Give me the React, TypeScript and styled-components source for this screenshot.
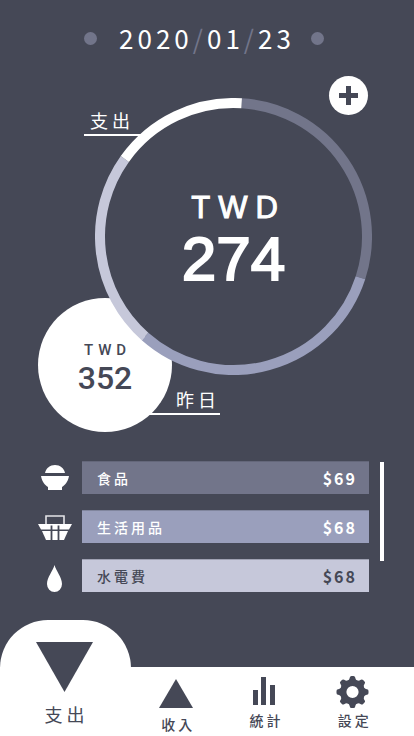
import React from "react";
import styled, { createGlobalStyle } from "styled-components";

const colors = {
  ink: "#454856",
  slate: "#72758a",
  blue: "#9a9fbc",
  mist: "#c6c8da",
  white: "#ffffff",
};

const GlobalStyle = createGlobalStyle`
  * { box-sizing: border-box; }
  body {
    margin: 0;
    background: ${colors.ink};
    color: ${colors.white};
    font-family: "Noto Sans CJK TC", "Noto Sans", sans-serif;
  }
  button { font: inherit; color: inherit; border: 0; padding: 0; cursor: pointer; }
`;

const Page = styled.div`
  display: flex;
  flex-direction: column;
  min-height: 100vh;
`;

const Header = styled.header`
  display: flex;
  align-items: center;
  justify-content: center;
  height: 76px;
  gap: 16px;
  padding-right: 6px;
`;

const DayDot = styled.button`
  width: 13px;
  height: 13px;
  border-radius: 50%;
  background: ${colors.slate};
`;

const DateText = styled.h1`
  margin: 0;
  padding-left: 6px;
  font-size: 26px;
  line-height: 32px;
  font-weight: 400;
  letter-spacing: 4px;
`;

const Slash = styled.span`
  color: ${colors.slate};
`;

const Stage = styled.main`
  position: relative;
  width: 338px;
  height: 356px;
  margin: 0 auto;
  padding: 22px 0 0 57px;
`;

const Donut = styled.section`
  position: relative;
  display: grid;
  width: 277px;
  height: 277px;
`;

const Ring = styled.svg`
  grid-area: 1 / 1;
  display: block;
  width: 100%;
  height: 100%;
`;

const Amount = styled.div`
  grid-area: 1 / 1;
  display: flex;
  flex-direction: column;
  align-items: center;
  justify-content: center;
  padding-top: 8px;
`;

const Currency = styled.span<{ $large?: boolean }>`
  font-family: ${(p) =>
    p.$large ? '"Liberation Sans", Arial, sans-serif' : 'Roboto, sans-serif'};
  font-size: ${(p) => (p.$large ? 31 : 15)}px;
  line-height: ${(p) => (p.$large ? 36 : 18)}px;
  font-weight: ${(p) => (p.$large ? 400 : 500)};
  letter-spacing: ${(p) => (p.$large ? 8 : 5)}px;
  padding-left: ${(p) => (p.$large ? 10 : 5)}px;
  -webkit-text-stroke: ${(p) => (p.$large ? 1 : 0)}px currentColor;
`;

const Value = styled.strong<{ $large?: boolean }>`
  font-family: ${(p) =>
    p.$large ? '"Liberation Sans", Arial, sans-serif' : 'Roboto, sans-serif'};
  font-size: ${(p) => (p.$large ? 62 : 32)}px;
  line-height: ${(p) => (p.$large ? 66 : 38)}px;
  font-weight: ${(p) => (p.$large ? 400 : 500)};
  -webkit-text-stroke: ${(p) => (p.$large ? 2 : 0)}px currentColor;
`;

const Yesterday = styled.section`
  position: absolute;
  left: 0;
  top: 222px;
  display: grid;
  width: 134px;
  height: 134px;
  border-radius: 50%;
  background: ${colors.white};
  color: ${colors.ink};
`;

const Caption = styled.span<{ $place: "expense" | "yesterday" }>`
  position: absolute;
  ${(p) =>
    p.$place === "expense"
      ? "left: 46px; top: 31px; width: 64px; padding-left: 6px;"
      : "left: 102px; top: 310px; width: 80px; padding-left: 36px;"}
  border-bottom: 2px solid ${colors.white};
  font-size: 18px;
  line-height: 27px;
  letter-spacing: 4px;
  white-space: nowrap;
`;

const AddButton = styled.button`
  position: absolute;
  right: 8px;
  top: 0;
  display: grid;
  place-items: center;
  width: 39px;
  height: 39px;
  border-radius: 50%;
  background: ${colors.white};
`;

const Breakdown = styled.section`
  display: flex;
  gap: 11px;
  margin-top: 29px;
  padding: 0 30px 28px 38px;
`;

const List = styled.ul`
  flex: 1;
  display: flex;
  flex-direction: column;
  gap: 16px;
  margin: 0;
  padding: 0;
  list-style: none;
`;

const Item = styled.li`
  display: grid;
  grid-template-columns: 34px 1fr;
  gap: 10px;
  height: 33px;
`;

const Bar = styled.div<{ $fill: string; $dark?: boolean }>`
  display: flex;
  align-items: center;
  justify-content: space-between;
  padding: 0 12px 0 15px;
  background: ${(p) => p.$fill};
  border-top: 1px solid rgba(69, 72, 86, 0.3);
  color: ${(p) => (p.$dark ? colors.ink : colors.white)};
  font-size: 14px;
  font-weight: 500;
  letter-spacing: 3px;
`;

const Price = styled.span`
  font-size: 16px;
  line-height: 24px;
  font-weight: 700;
  letter-spacing: 2px;
`;

const ScrollThumb = styled.div`
  width: 4px;
  height: 99px;
  margin-top: 1px;
  background: ${colors.white};
`;

const Nav = styled.nav`
  display: grid;
  grid-template-columns: 131px repeat(3, 1fr);
  column-gap: 2px;
  height: 69px;
  margin-top: auto;
  padding-right: 18px;
  background: ${colors.white};
  color: ${colors.ink};
`;

const Tab = styled.button<{ $gap: number; $bottom: number }>`
  display: flex;
  flex-direction: column;
  align-items: center;
  justify-content: flex-end;
  gap: ${(p) => p.$gap}px;
  padding-bottom: ${(p) => p.$bottom}px;
  background: ${colors.white};
  color: ${colors.ink};
`;

const ActiveTab = styled(Tab)`
  height: 116px;
  margin-top: -47px;
  padding-right: 2px;
  border-radius: 48px 48px 0 0;
`;

const TabLabel = styled.span<{ $active?: boolean }>`
  font-size: ${(p) => (p.$active ? 18 : 14)}px;
  line-height: ${(p) => (p.$active ? 27 : 20)}px;
  letter-spacing: ${(p) => (p.$active ? 4 : 3)}px;
  padding-left: 4px;
  font-weight: ${(p) => (p.$active ? 400 : 500)};
`;

const CENTER = 138.5;
const RADIUS = 133.5;

const segments = [
  { from: 3.5, to: 108, color: colors.slate },
  { from: 108, to: 221.5, color: colors.blue },
  { from: 221.5, to: 305.5, color: colors.mist },
  { from: 305.5, to: 363.5, color: colors.white },
];

function point(angle: number) {
  const a = ((angle - 90) * Math.PI) / 180;
  return `${CENTER + RADIUS * Math.cos(a)} ${CENTER + RADIUS * Math.sin(a)}`;
}

function BowlIcon() {
  return (
    <svg width="34" height="33" viewBox="0 0 34 33" fill="#fff" aria-hidden="true">
      <path d="M7 12C8 7 12 4 17 4s9 3 10 8z" />
      <path d="M3 15h28c-1 6-4 9-7 11v3H10v-3c-3-2-6-5-7-11z" />
    </svg>
  );
}

function BasketIcon() {
  return (
    <svg width="34" height="33" viewBox="0 0 34 33" aria-hidden="true">
      <path d="M8 15V6h18v9" fill="none" stroke="#e4e4e8" strokeWidth="1.6" />
      <path d="M0 14h34l-3 5.500H3z" fill="#fff" />
      <path d="M4 21h26l-4 9H8z" fill="#fff" />
      <path d="M13.500 15.500v15M20.500 15.500v15" stroke={colors.ink} strokeWidth="1.800" />
    </svg>
  );
}

function DropIcon() {
  return (
    <svg width="34" height="33" viewBox="0 0 34 33" fill="#fff" aria-hidden="true">
      <path d="M16.500 6C18 12 24 18 24 25a7.500 8 0 0 1-15 0C9 18 15 12 16.500 6z" />
    </svg>
  );
}

function GearIcon() {
  return (
    <svg width="33" height="32" viewBox="-16.500 -16 33 32" aria-hidden="true">
      <circle r="9.3" fill="none" stroke={colors.ink} strokeWidth="6.4" />
      {[0, 45, 90, 135, 180, 225, 270, 315].map((angle) => (
        <path
          key={angle}
          transform={`rotate(${angle})`}
          d="M-5-11C-3.500-12-3-13-2.700-14.500Q-2.500-16-1-16H1Q2.500-16 2.700-14.500C3-13 3.500-12 5-11z"
          fill={colors.ink}
        />
      ))}
    </svg>
  );
}

const items = [
  { name: "食品", price: "$69", fill: colors.slate, dark: false, icon: <BowlIcon /> },
  { name: "生活用品", price: "$68", fill: colors.blue, dark: false, icon: <BasketIcon /> },
  { name: "水電費", price: "$68", fill: colors.mist, dark: true, icon: <DropIcon /> },
];

export default function App() {
  return (
    <Page>
      <GlobalStyle />
      <Header>
        <DayDot aria-label="前一天" />
        <DateText>
          2020<Slash>/</Slash>01<Slash>/</Slash>23
        </DateText>
        <DayDot aria-label="後一天" />
      </Header>

      <Stage>
        <Caption $place="expense">支出</Caption>
        <Caption $place="yesterday">昨日</Caption>
        <Yesterday>
          <Amount>
            <Currency>TWD</Currency>
            <Value>352</Value>
          </Amount>
        </Yesterday>
        <Donut>
          <Ring viewBox="0 0 277 277" aria-hidden="true">
            <circle cx={CENTER} cy={CENTER} r={RADIUS} fill={colors.ink} />
            {segments.map((s) => (
              <path
                key={s.from}
                d={`M${point(s.from)}A${RADIUS} ${RADIUS} 0 0 1 ${point(s.to)}`}
                fill="none"
                stroke={s.color}
                strokeWidth="10"
              />
            ))}
          </Ring>
          <Amount>
            <Currency $large>TWD</Currency>
            <Value $large>274</Value>
          </Amount>
        </Donut>
        <AddButton aria-label="新增">
          <svg width="19" height="19" viewBox="0 0 19 19" aria-hidden="true">
            <path d="M7 0h5v7h7v5h-7v7H7v-7H0V7h7z" fill={colors.ink} />
          </svg>
        </AddButton>
      </Stage>

      <Breakdown>
        <List>
          {items.map((item) => (
            <Item key={item.name}>
              {item.icon}
              <Bar $fill={item.fill} $dark={item.dark}>
                <span>{item.name}</span>
                <Price>{item.price}</Price>
              </Bar>
            </Item>
          ))}
        </List>
        <ScrollThumb />
      </Breakdown>

      <Nav>
        <ActiveTab $gap={9} $bottom={8} aria-current="page">
          <svg width="57" height="50" viewBox="0 0 57 50" aria-hidden="true">
            <path d="M0 0h57L28.500 50z" fill={colors.ink} />
          </svg>
          <TabLabel $active>支出</TabLabel>
        </ActiveTab>
        <Tab $gap={6} $bottom={2}>
          <svg width="34" height="29" viewBox="0 0 34 29" aria-hidden="true">
            <path d="M17 0l17 29H0z" fill={colors.ink} />
          </svg>
          <TabLabel>收入</TabLabel>
        </Tab>
        <Tab $gap={5} $bottom={6}>
          <svg width="22" height="28" viewBox="0 0 22 28" aria-hidden="true">
            <path d="M0 13h5v15H0zM8 0h5v28H8zM17 8h5v20h-5z" fill={colors.ink} />
          </svg>
          <TabLabel>統計</TabLabel>
        </Tab>
        <Tab $gap={2} $bottom={6}>
          <GearIcon />
          <TabLabel>設定</TabLabel>
        </Tab>
      </Nav>
    </Page>
  );
}
